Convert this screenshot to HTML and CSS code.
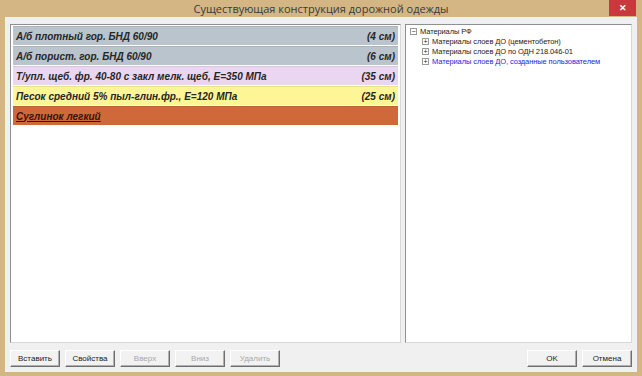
FILE: index.html
```html
<!DOCTYPE html>
<html lang="ru">
<head>
    <meta charset="UTF-8">
    <title>Существующая конструкция дорожной одежды</title>
    <link rel="stylesheet" href="styles.css">
</head>
<body>
    <div class="window">
        <div class="titlebar">
            <span class="title">Существующая конструкция дорожной одежды</span>
            <span class="close">&#x2715;</span>
        </div>
        <div class="client">
            <div class="panels">
                <div class="layers">
                    <div class="layer asphalt">
                        <span>А/б плотный гор. БНД 60/90</span>
                        <span>(4 см)</span>
                    </div>
                    <div class="layer asphalt">
                        <span>А/б порист. гор. БНД 60/90</span>
                        <span>(6 см)</span>
                    </div>
                    <div class="layer gravel">
                        <span>Т/упл. щеб. фр. 40-80 с закл мелк. щеб, Е=350 МПа</span>
                        <span>(35 см)</span>
                    </div>
                    <div class="layer sand">
                        <span>Песок средний 5% пыл-глин.фр., Е=120 МПа</span>
                        <span>(25 см)</span>
                    </div>
                    <div class="layer soil">
                        <span class="soil-name">Суглинок легкий</span>
                    </div>
                </div>
                <div class="tree">
                    <div class="node root">
                        <span class="toggle">&minus;</span>
                        <span class="label">Материалы РФ</span>
                    </div>
                    <div class="node child">
                        <span class="toggle">+</span>
                        <span class="label">Материалы слоев ДО (цементобетон)</span>
                    </div>
                    <div class="node child">
                        <span class="toggle">+</span>
                        <span class="label">Материалы слоев ДО по ОДН 218.046-01</span>
                    </div>
                    <div class="node child user">
                        <span class="toggle">+</span>
                        <span class="label">Материалы слоев ДО, созданные пользователем</span>
                    </div>
                </div>
            </div>
            <div class="buttons">
                <div class="group">
                    <button>Вставить</button>
                    <button>Свойства</button>
                    <button disabled>Вверх</button>
                    <button disabled>Вниз</button>
                    <button disabled>Удалить</button>
                </div>
                <div class="group">
                    <button>OK</button>
                    <button>Отмена</button>
                </div>
            </div>
        </div>
    </div>
</body>
</html>
```

FILE: styles.css
```css
body {
    margin: 0;
    font-family: "Liberation Sans", Arial, sans-serif;
}
.window {
    width: 642px;
    height: 376px;
    box-sizing: border-box;
    background-color: #d3b684;
    padding: 0 5px 4px 5px;
    display: flex;
    flex-direction: column;
}
.titlebar {
    height: 17px;
    display: flex;
    align-items: center;
    justify-content: center;
    position: relative;
}
.title {
    font-family: "Open Sans", sans-serif;
    font-size: 11px;
    color: #3a3a3a;
    margin-top: -1px;
}
.close {
    position: absolute;
    top: 0;
    right: 1px;
    width: 27px;
    height: 16px;
    background-color: #c9383c;
    color: #fff;
    font-size: 9px;
    font-weight: bold;
    display: flex;
    align-items: center;
    justify-content: center;
}
.client {
    flex: 1;
    background-color: #f0f0f0;
    display: flex;
    flex-direction: column;
    padding: 7px 5px 0 5px;
}
.panels {
    display: flex;
    gap: 4px;
    height: 319px;
}
.layers {
    width: 391px;
    box-sizing: border-box;
    background: #fff;
    border: 1px solid #8f8f8f;
    border-right-color: #d8d8d8;
    border-bottom-color: #d8d8d8;
    padding: 1px 2px;
    display: flex;
    flex-direction: column;
    gap: 1px;
}
.layer {
    height: 19px;
    box-sizing: border-box;
    border-top: 1px solid rgba(0, 0, 0, 0.08);
    display: flex;
    align-items: center;
    justify-content: space-between;
    padding: 0 3px 0 3px;
    font-size: 10px;
    font-weight: bold;
    font-style: italic;
    color: #262626;
}
.asphalt {
    background-color: #b9c4cd;
}
.gravel {
    background-color: #ead6f0;
}
.sand {
    background-color: #fdf596;
}
.soil {
    background-color: #d0693a;
}
.soil-name {
    color: #3b1208;
    text-decoration: underline;
}
.tree {
    flex: 1;
    box-sizing: border-box;
    background: #fff;
    border: 1px solid #8f8f8f;
    border-right-color: #d8d8d8;
    border-bottom-color: #d8d8d8;
    padding: 1px 4px;
    font-size: 7.5px;
    letter-spacing: -0.1px;
    color: #222;
}
.node {
    height: 10px;
    display: flex;
    align-items: center;
    gap: 3px;
}
.child {
    padding-left: 12px;
}
.user {
    color: #1e1ee0;
}
.toggle {
    width: 7px;
    height: 7px;
    box-sizing: border-box;
    border: 1px solid #9a9a9a;
    color: #222;
    font-size: 7px;
    letter-spacing: 0;
    line-height: 5px;
    text-align: center;
}
.buttons {
    flex: 1;
    display: flex;
    justify-content: space-between;
    align-items: center;
    padding-top: 1px;
}
.group {
    display: flex;
    gap: 5px;
}
button {
    width: 50px;
    height: 17px;
    padding: 0;
    font-family: "Liberation Sans", Arial, sans-serif;
    font-size: 8px;
    color: #222;
    background-color: #f2f2f2;
    border: 1px solid;
    border-color: #fff #6e6e6e #6e6e6e #fff;
    box-shadow: inset -1px -1px 0 #b0b0b0;
}
button:disabled {
    color: #a8a8a8;
}
```
